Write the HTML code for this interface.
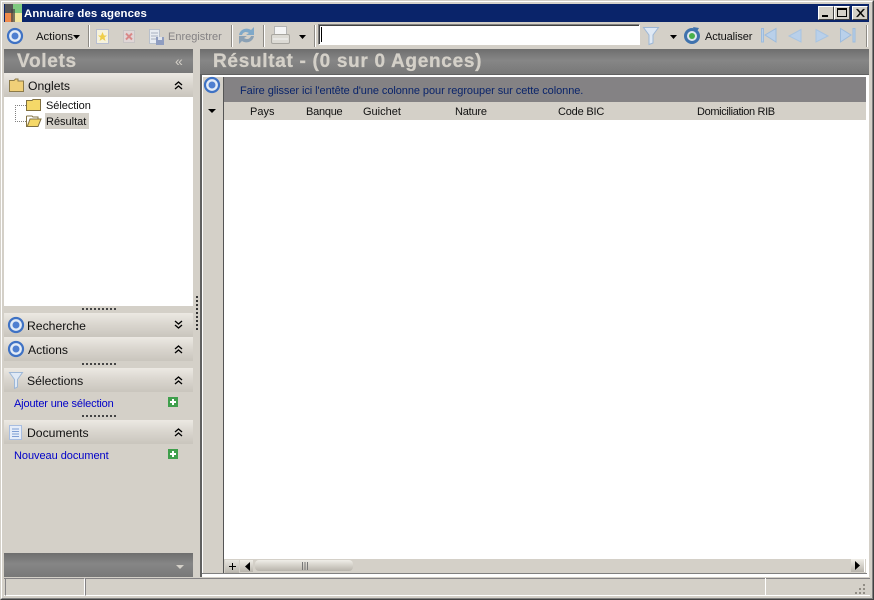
<!DOCTYPE html>
<html><head><meta charset="utf-8">
<style>
*{box-sizing:border-box}
html,body{margin:0;padding:0;width:874px;height:600px;overflow:hidden;background:#d4d0c8}
body{position:relative;font-family:"Liberation Sans",sans-serif;font-size:11px;color:#111}
.a{position:absolute}
.t{position:absolute;white-space:nowrap;line-height:14px;font-size:11px}
.hd{position:absolute;left:4px;width:189px;height:24px;background:linear-gradient(#ece9e3,#d9d5ce 50%,#c9c5bd)}
.hd .t{font-size:12.2px;top:6px}
.gr{background:linear-gradient(#6e6e6e,#868686 45%,#787878)}
.big{position:absolute;white-space:nowrap;font-weight:bold;color:#d4d0c8;font-size:19px;line-height:24px;letter-spacing:.7px;-webkit-text-stroke:.3px #d4d0c8}
.sep{position:absolute;top:25px;height:22px;width:2px;background:#fff;border-left:1px solid #8d8a84}
.dots{position:absolute;left:82px;width:34px;height:2px;background:repeating-linear-gradient(90deg,#444 0 2px,transparent 2px 4px)}
.lnk{position:absolute;left:14px;color:#0000c8;font-size:11px;white-space:nowrap;line-height:14px}
svg{position:absolute;overflow:visible}
</style></head><body>

<!-- window frame -->
<div class="a" style="left:0;top:0;width:874px;height:600px;border:1px solid #d4d0c8;border-right-color:#404040;border-bottom-color:#404040"></div>
<div class="a" style="left:1px;top:1px;width:872px;height:598px;border:1px solid #fff;border-right-color:#808080;border-bottom-color:#808080"></div>

<!-- title bar -->
<div class="a" style="left:4px;top:4px;width:865px;height:18px;background:#0a246a"></div>
<svg style="left:5px;top:4px" width="17" height="18"><rect width="8" height="9" fill="#555"/><rect x="8" width="9" height="9" fill="#7fc97f"/><rect y="9" width="8" height="9" fill="#f08a4b"/><rect x="8" y="9" width="9" height="9" fill="#f3e7a0"/><rect x="6" y="5" width="4" height="13" fill="#444" opacity=".7"/></svg>
<div class="t" style="left:24px;top:7px;color:#fff;font-weight:bold;font-size:11.4px;letter-spacing:.1px">Annuaire des agences</div>
<div class="a" style="left:818px;top:6px;width:16px;height:14px;background:#d4d0c8;border:1px solid;border-color:#fff #404040 #404040 #fff"><div class="a" style="left:3px;top:8px;width:6px;height:2px;background:#000"></div></div>
<div class="a" style="left:834px;top:6px;width:16px;height:14px;background:#d4d0c8;border:1px solid;border-color:#fff #404040 #404040 #fff"><div class="a" style="left:2px;top:1px;width:10px;height:9px;border:1px solid #000;border-top-width:2px"></div></div>
<div class="a" style="left:852px;top:6px;width:16px;height:14px;background:#d4d0c8;border:1px solid;border-color:#fff #404040 #404040 #fff"><svg style="left:3px;top:2px" width="9" height="8"><path d="M.5 0L7.500 8M1.500 0L8.500 8M7.500 0L.5 8M8.500 0L1.500 8" stroke="#000" stroke-width=".7"/></svg></div>

<!-- toolbar -->
<svg style="left:6px;top:27px" width="18" height="18"><circle cx="9" cy="9" r="7" fill="#e4ecf6" stroke="#3f72c4" stroke-width="2.200"/><circle cx="9" cy="9" r="3.500" fill="#4f7fd0"/></svg>
<div class="t" style="left:36px;top:30px;font-size:11.3px">Actions</div>
<svg style="left:73px;top:35px" width="8" height="4"><path d="M0 0H7L3.500 4Z" fill="#000"/></svg>
<div class="sep" style="left:88px"></div>
<svg style="left:96px;top:29px" width="14" height="15"><rect x=".5" y=".5" width="12" height="14" fill="#f6f2dc" stroke="#b8bed0"/><path d="M6.500 3L8 6.500H11L8.500 8.500L9.500 12L6.500 10L3.500 12L4.500 8.500L2 6.500H5Z" fill="#efce4a"/></svg>
<svg style="left:123px;top:30px" width="12" height="13"><rect x=".5" y=".5" width="11" height="12" fill="#e0d6d6" stroke="#c8c4c4"/><path d="M3 3.500L9 9.500M9 3.500L3 9.500" stroke="#d98888" stroke-width="2"/></svg>
<svg style="left:149px;top:29px" width="16" height="16"><rect x=".5" y=".5" width="10" height="14" fill="#e8ecf2" stroke="#b8c0cc"/><path d="M2 4H9M2 7H9M2 10H9" stroke="#a8b0c0"/><rect x="7" y="8" width="8" height="8" fill="#8f9dc0"/><rect x="9" y="8" width="4" height="3" fill="#e0e4ec"/></svg>
<div class="t" style="left:168px;top:30px;color:#848284">Enregistrer</div>
<div class="sep" style="left:231px"></div>
<svg style="left:237px;top:26px" width="19" height="19"><path d="M2 9C3 3 10 1 14 4L17 1V9H9L12 7C9 5 6 6 5 9Z" fill="#7fa8c8"/><path d="M17 10C16 16 9 18 5 15L2 18V10H10L7 12C10 14 13 13 14 10Z" fill="#8aa0b4"/></svg>
<div class="sep" style="left:263px"></div>
<svg style="left:271px;top:26px" width="19" height="19"><rect x="3.500" y=".5" width="12" height="9" fill="#f4f4f4" stroke="#b4b4b4"/><rect x=".5" y="8.500" width="18" height="9" rx="1.500" fill="#dcdad4" stroke="#a8a6a0"/><path d="M2 13H17" stroke="#f4f4f4"/></svg>
<svg style="left:299px;top:35px" width="8" height="4"><path d="M0 0H7L3.500 4Z" fill="#000"/></svg>
<div class="sep" style="left:314px"></div>
<div class="a" style="left:318px;top:24px;width:322px;height:21px;background:#fff;border:1px solid;border-color:#808080 #fff #fff #808080;box-shadow:inset 1px 1px 0 #404040"></div>
<div class="a" style="left:321px;top:27px;width:1px;height:15px;background:#000"></div>
<svg style="left:643px;top:27px" width="16" height="18"><path d="M.5 .5H15.500L10 8V16L6 17.500V8Z" fill="#dfe9f5" stroke="#9db7d6"/></svg>
<svg style="left:670px;top:35px" width="8" height="4"><path d="M0 0H7L3.500 4Z" fill="#000"/></svg>
<svg style="left:683px;top:27px" width="18" height="18"><circle cx="9" cy="9" r="6.500" fill="#dfe7ee" stroke="#3f72ad" stroke-width="3"/><circle cx="9" cy="9" r="3" fill="#49b04a"/><path d="M10 0L16 1L13 6Z" fill="#3f72ad"/></svg>
<div class="t" style="left:705px;top:30px;letter-spacing:-.1px">Actualiser</div>
<svg style="left:761px;top:28px" width="16" height="15" fill="#b9d0ea" stroke="#9dbbdc"><path d="M.5 .5H2.500V14H.5Z"/><path d="M15 .5V14L4 7Z"/></svg>
<svg style="left:788px;top:29px" width="14" height="14" fill="#b9d0ea" stroke="#a8c4e2"><path d="M13 .5V13L1 7Z"/></svg>
<svg style="left:815px;top:29px" width="14" height="14" fill="#b9d0ea" stroke="#a8c4e2"><path d="M1 .5V13L13 7Z"/></svg>
<svg style="left:840px;top:28px" width="16" height="15" fill="#b9d0ea" stroke="#9dbbdc"><path d="M13 .5H15V14H13Z"/><path d="M.5 .5V14L11 7Z"/></svg>
<div class="sep" style="left:866px"></div>

<!-- left pane -->
<div class="a gr" style="left:4px;top:49px;width:189px;height:24px"></div>
<div class="big" style="left:17px;top:50px">Volets</div>
<div class="t" style="left:175px;top:54px;color:#d4d0c8;font-size:14px">«</div>

<div class="hd" style="top:73px"><div class="t" style="left:24px">Onglets</div></div>
<svg style="left:9px;top:78px" width="15" height="14"><path d="M.5 2.500H5L6.500 1H9V3H14.500V13.500H.5Z" fill="#f0cf78" stroke="#8c7a48"/></svg>
<svg style="left:174px;top:81px" width="9" height="9" fill="none" stroke="#000" stroke-width="1.300"><path d="M1 4L4.500 1L8 4M1 8L4.500 5L8 8"/></svg>
<div class="a" style="left:4px;top:97px;width:189px;height:209px;background:#fff"></div>
<div class="a" style="left:15px;top:105px;width:11px;height:17px;border-left:1px dotted #808080;border-top:1px dotted #808080;border-bottom:1px dotted #808080"></div>
<svg style="left:26px;top:98px" width="16" height="14"><path d="M.5 2.500H6L7 1.500H14.500V12.500H.5Z" fill="#f5d868" stroke="#807040"/></svg>
<svg style="left:26px;top:114px" width="16" height="13"><path d="M.5 2V12.500H12L15 5H4L1.500 12" fill="#f5d868" stroke="#807040"/><path d="M.5 2H6L7 3H12V5" fill="none" stroke="#807040"/></svg>
<div class="t" style="left:46px;top:99px;letter-spacing:-.05px">Sélection</div>
<div class="a" style="left:45px;top:113px;width:44px;height:16px;background:#d4d0c8"></div>
<div class="t" style="left:46px;top:115px">Résultat</div>
<div class="dots" style="top:308px"></div>

<div class="hd" style="top:313px"><div class="t" style="left:23px">Recherche</div></div>
<svg style="left:7px;top:316px" width="18" height="18"><circle cx="9" cy="9" r="7" fill="#e4ecf6" stroke="#3f72c4" stroke-width="2.200"/><circle cx="9" cy="9" r="3.500" fill="#4f7fd0"/></svg>
<svg style="left:174px;top:320px" width="9" height="9" fill="none" stroke="#000" stroke-width="1.300"><path d="M1 1L4.500 4L8 1M1 5L4.500 8L8 5"/></svg>
<div class="hd" style="top:337px"><div class="t" style="left:24px">Actions</div></div>
<svg style="left:7px;top:340px" width="18" height="18"><circle cx="9" cy="9" r="7" fill="#e4ecf6" stroke="#3f72c4" stroke-width="2.200"/><circle cx="9" cy="9" r="3.500" fill="#4f7fd0"/></svg>
<svg style="left:174px;top:345px" width="9" height="9" fill="none" stroke="#000" stroke-width="1.300"><path d="M1 4L4.500 1L8 4M1 8L4.500 5L8 8"/></svg>
<div class="dots" style="top:363px"></div>
<div class="hd" style="top:368px"><div class="t" style="left:23px">Sélections</div></div>
<svg style="left:9px;top:372px" width="14" height="17"><path d="M.5 .5H13.500L8.500 7.500V15L5.500 16.500V7.500Z" fill="#dfe9f5" stroke="#9db7d6"/></svg>
<svg style="left:174px;top:376px" width="9" height="9" fill="none" stroke="#000" stroke-width="1.300"><path d="M1 4L4.500 1L8 4M1 8L4.500 5L8 8"/></svg>
<div class="lnk" style="top:397px;letter-spacing:-.15px">Ajouter une sélection</div>
<svg style="left:168px;top:397px" width="10" height="10"><rect width="10" height="10" fill="#3f9f4c"/><path d="M5 2V8M2 5H8" stroke="#fff" stroke-width="2"/></svg>
<div class="dots" style="top:415px"></div>
<div class="hd" style="top:420px"><div class="t" style="left:23px">Documents</div></div>
<svg style="left:9px;top:425px" width="13" height="15"><rect x=".5" y=".5" width="12" height="14" fill="#e6edf9" stroke="#a8bde0"/><path d="M3 4H10M3 6.500H10M3 9H10M3 11.500H10" stroke="#7f9ed4"/></svg>
<svg style="left:174px;top:428px" width="9" height="9" fill="none" stroke="#000" stroke-width="1.300"><path d="M1 4L4.500 1L8 4M1 8L4.500 5L8 8"/></svg>
<div class="lnk" style="top:449px;letter-spacing:-.05px">Nouveau document</div>
<svg style="left:168px;top:449px" width="10" height="10"><rect width="10" height="10" fill="#3f9f4c"/><path d="M5 2V8M2 5H8" stroke="#fff" stroke-width="2"/></svg>

<div class="a gr" style="left:4px;top:553px;width:189px;height:24px"></div>
<svg style="left:176px;top:565px" width="8" height="4"><path d="M0 0H8L4 4Z" fill="#d4d0c8"/></svg>

<!-- vertical splitter dots -->
<div class="a" style="left:196px;top:296px;width:2px;height:36px;background:repeating-linear-gradient(#333 0 2px,transparent 2px 4px)"></div>

<!-- right pane -->
<div class="a gr" style="left:200px;top:49px;width:669px;height:25px"></div>
<div class="big" style="left:213px;top:50px">Résultat - (0 sur 0 Agences)</div>
<div class="a" style="left:200px;top:74px;width:669px;height:503px;background:#fff;border-left:2px solid #606060;border-top:1px solid #606060"></div>
<div class="a" style="left:203px;top:77px;width:20px;height:497px;background:#d4d0c8"></div>
<div class="a" style="left:223px;top:77px;width:1px;height:497px;background:#555"></div>
<svg style="left:203px;top:76px" width="18" height="18"><circle cx="9" cy="9" r="7" fill="#e4ecf6" stroke="#3f72c4" stroke-width="2.200"/><circle cx="9" cy="9" r="3.500" fill="#4f7fd0"/></svg>
<svg style="left:208px;top:109px" width="8" height="4"><path d="M0 0H8L4 4Z" fill="#000"/></svg>
<div class="a" style="left:224px;top:77px;width:642px;height:25px;background:#848284"></div>
<div class="t" style="left:240px;top:84px;color:#0a246a;letter-spacing:-.07px">Faire glisser ici l'entête d'une colonne pour regrouper sur cette colonne.</div>
<div class="a" style="left:224px;top:102px;width:642px;height:18px;background:#d4d0c8"></div>
<div class="t" style="left:250px;top:105px">Pays</div>
<div class="t" style="left:306px;top:105px;letter-spacing:-.25px">Banque</div>
<div class="t" style="left:363px;top:105px">Guichet</div>
<div class="t" style="left:455px;top:105px;letter-spacing:-.2px">Nature</div>
<div class="t" style="left:558px;top:105px;letter-spacing:-.2px">Code BIC</div>
<div class="t" style="left:697px;top:105px;letter-spacing:-.35px">Domiciliation RIB</div>

<!-- scrollbar -->
<div class="a" style="left:224px;top:559px;width:642px;height:14px;background:#d4d0c8"></div>
<div class="a" style="left:225px;top:560px;width:14px;height:13px;background:linear-gradient(#e8e6e0,#b8b4ac)"></div>
<div class="a" style="left:229px;top:566px;width:7px;height:1px;background:#000"></div>
<div class="a" style="left:232px;top:563px;width:1px;height:7px;background:#000"></div>
<div class="a" style="left:240px;top:560px;width:13px;height:12px;background:linear-gradient(#f0eee8,#b8b4ac)"></div>
<svg style="left:245px;top:562px" width="5" height="9"><path d="M5 0V9L0 4.500Z" fill="#000"/></svg>
<div class="a" style="left:255px;top:560px;width:98px;height:11px;border-radius:4px;background:linear-gradient(#f0eee8,#cfcbc3 60%,#b8b4ac)"></div>
<div class="a" style="left:302px;top:562px;width:7px;height:8px;background:repeating-linear-gradient(90deg,#777 0 1px,transparent 1px 2.500px)"></div>
<div class="a" style="left:851px;top:559px;width:14px;height:13px;background:linear-gradient(#f0eee8,#b8b4ac);border-right:1px solid #fff"></div>
<svg style="left:855px;top:561px" width="5" height="9"><path d="M0 0V9L5 4.500Z" fill="#000"/></svg>
<div class="a" style="left:202px;top:573px;width:665px;height:1px;background:#808080"></div>

<!-- status bar -->
<div class="a" style="left:4px;top:578px;width:866px;height:18px;border-top:1px solid #848284;border-bottom:1px solid #fff"></div>
<div class="a" style="left:5px;top:578px;width:80px;height:18px;border:1px solid;border-color:#848284 #fff #fff #848284"></div>
<div class="a" style="left:85px;top:578px;width:681px;height:18px;border-right:1px solid #fff;border-left:1px solid #848284;border-bottom:1px solid #fff"></div>
<svg style="left:855px;top:584px" width="12" height="11" fill="#918d85"><rect x="8" y="0" width="2" height="2"/><rect x="4" y="4" width="2" height="2"/><rect x="8" y="4" width="2" height="2"/><rect x="0" y="8" width="2" height="2"/><rect x="4" y="8" width="2" height="2"/><rect x="8" y="8" width="2" height="2"/></svg>

</body></html>
